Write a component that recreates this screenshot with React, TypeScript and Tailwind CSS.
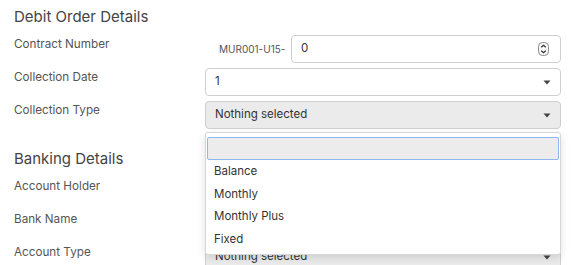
import { useState } from "react";

const font = { fontFamily: "Inter, 'Liberation Sans', sans-serif" };

const collectionTypes = ["Balance", "Monthly", "Monthly Plus", "Fixed"];

function Caret() {
  return (
    <svg width="8" height="5" viewBox="0 0 8 5" className="text-[#444]">
      <path d="M0.5 0.5 L7.5 0.5 L4 4.5 Z" fill="currentColor" />
    </svg>
  );
}

function Spinner() {
  return (
    <svg width="11" height="14" viewBox="0 0 11 14">
      <rect x="0.5" y="0.5" width="10" height="13" rx="4" fill="#f7f7f7" stroke="#8a8a8a" />
      <path d="M3.2 5.3 L5.5 3.2 L7.8 5.3" fill="none" stroke="#333" strokeWidth="1.2" />
      <path d="M3.2 8.7 L5.5 10.8 L7.8 8.7" fill="none" stroke="#333" strokeWidth="1.2" />
    </svg>
  );
}

function SelectBox({ value, gray }: { value?: string; gray?: boolean }) {
  return (
    <div
      className={`flex h-[28px] w-full items-center justify-between rounded border border-[#cfcfcf] pl-[9px] pr-[9px] text-[11.5px] text-[#333] ${
        gray ? "bg-[#ebebeb]" : "bg-white"
      }`}
    >
      <span>{value}</span>
      <Caret />
    </div>
  );
}

function Row({ label, children }: { label: string; children: React.ReactNode }) {
  return (
    <div className="grid grid-cols-[191px_356px] items-start">
      <label className="pt-[1px] text-[11.7px] leading-[16px] text-[#555]">{label}</label>
      {children}
    </div>
  );
}

export default function App() {
  const [open] = useState(true);

  return (
    <main className="min-h-[265px] w-[574px] overflow-hidden bg-white" style={font}>
      <div className="px-[14px] pt-[7px]">
        <h2 className="mb-[8px] text-[15px] leading-[20px] text-[#444]">Debit Order Details</h2>

        <div className="flex flex-col gap-[5px]">
          <Row label="Contract Number">
            <div className="flex items-center">
              <span className="w-[86px] pl-[14px] text-[10px] text-[#555]">MUR001-U15-</span>
              <div className="flex h-[28px] flex-1 items-center justify-between rounded border border-[#cfcfcf] bg-white pl-[9px] pr-[11px] text-[11.5px] text-[#333]">
                <span>0</span>
                <Spinner />
              </div>
            </div>
          </Row>

          <Row label="Collection Date">
            <SelectBox value="1" />
          </Row>

          <Row label="Collection Type">
            <div className="relative">
              <SelectBox value="Nothing selected" gray />
              {open && (
                <div className="absolute left-0 top-[31px] z-10 w-[356px] rounded-[3px] border border-[#d6d6d6] bg-white pb-[3px] pt-[4px] shadow-[0_3px_8px_rgba(0,0,0,0.12)]">
                  <div className="px-[1px]">
                    <div className="h-[23px] w-full rounded-[2px] border border-[#8fb6f0] bg-[#ececec]" />
                  </div>
                  <ul className="text-[11.5px] text-[#333]">
                    {collectionTypes.map((type) => (
                      <li key={type} className="h-[22.7px] pl-[8px] leading-[22.7px]">
                        {type}
                      </li>
                    ))}
                  </ul>
                </div>
              )}
            </div>
          </Row>
        </div>

        <h2 className="mb-[8px] mt-[20px] text-[15px] leading-[20px] text-[#444]">Banking Details</h2>

        <div className="flex flex-col gap-[5px]">
          <Row label="Account Holder">
            <div className="h-[28px] w-full rounded border border-[#cfcfcf] bg-white" />
          </Row>
          <Row label="Bank Name">
            <SelectBox gray />
          </Row>
          <Row label="Account Type">
            <SelectBox value="Nothing selected" gray />
          </Row>
        </div>
      </div>
    </main>
  );
}
